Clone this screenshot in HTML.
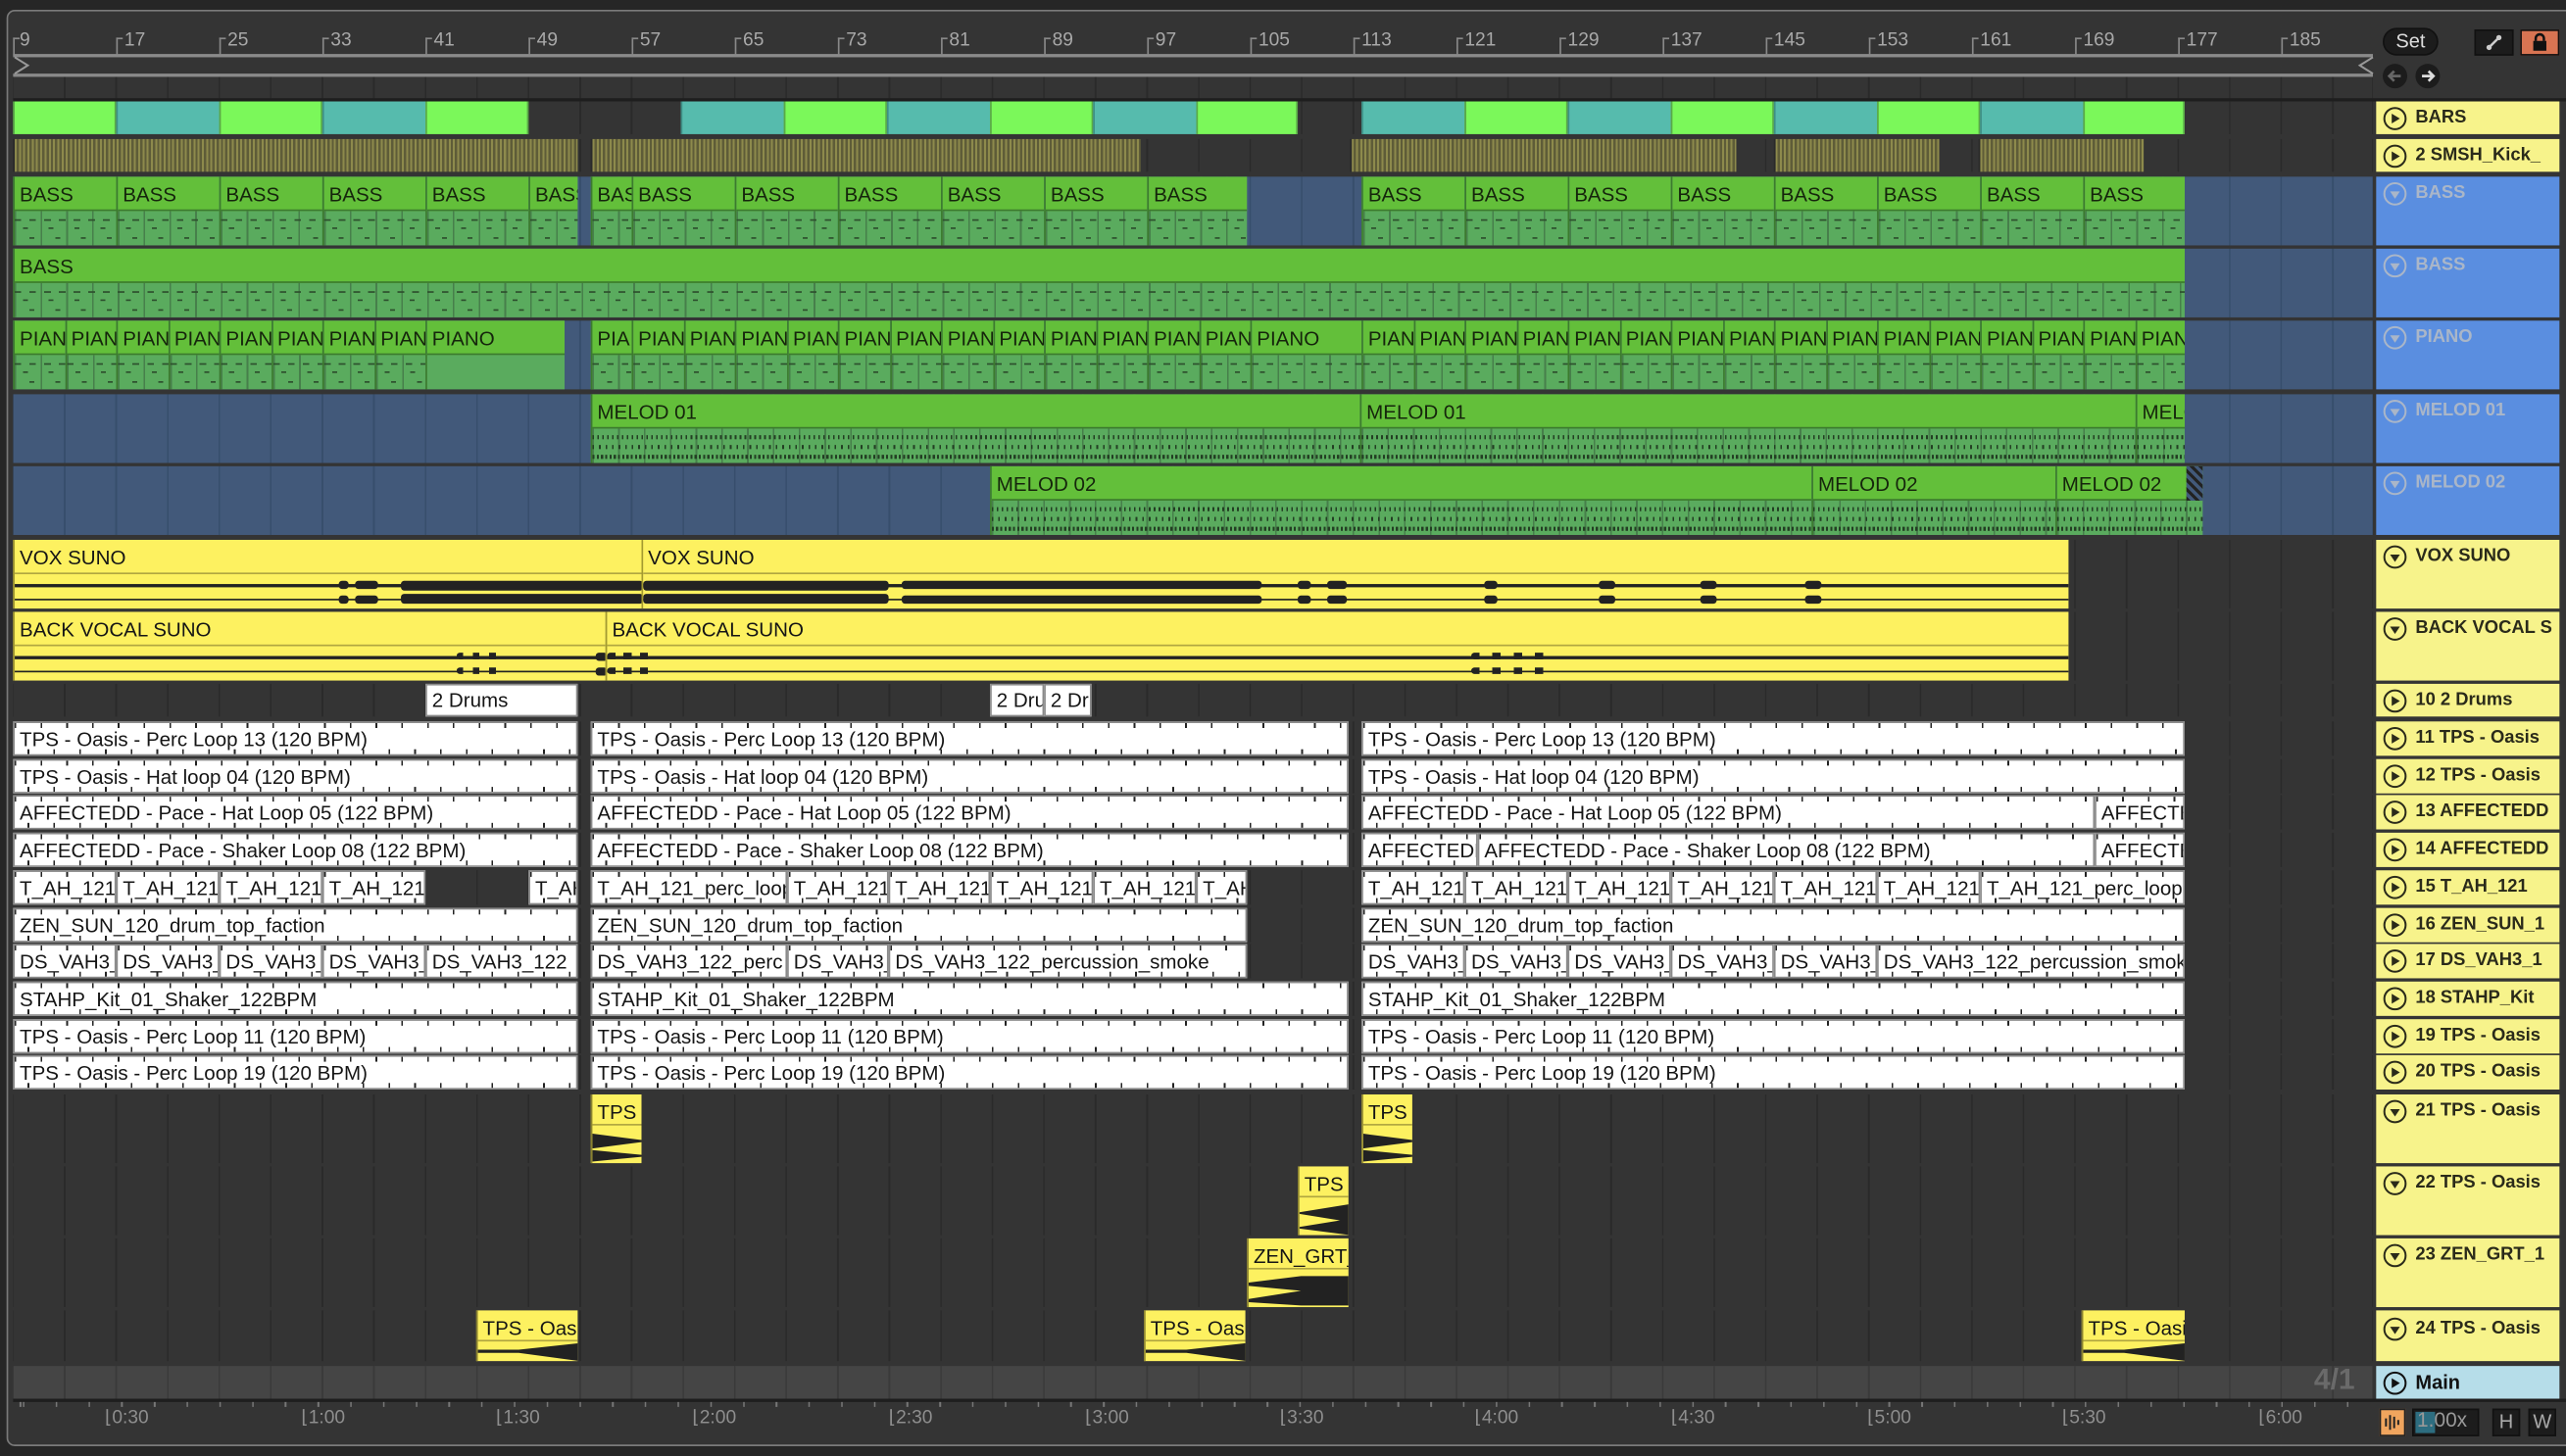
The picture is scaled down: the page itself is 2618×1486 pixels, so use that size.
<!DOCTYPE html>
<html><head><meta charset="utf-8">
<style>
*{margin:0;padding:0;box-sizing:border-box}
html,body{width:2618px;height:1486px;overflow:hidden;background:#262626}
#s{position:absolute;left:0;top:0;width:1568px;height:890px;transform:scale(1.66964);transform-origin:0 0;font-family:"Liberation Sans",sans-serif}
.frame{position:absolute;left:4px;top:6px;width:1570px;height:878px;border:1.5px solid #7a7a7a;border-radius:5px;background:#343434}
.ab{position:absolute}
.lane{position:absolute;left:8px;width:1442px;background:repeating-linear-gradient(90deg,#2a2a2a 0 1px,#343434 1px 31.5px);background-position:-0.5px 0}
.blue{background:repeating-linear-gradient(90deg,#374e6c 0 1px,#42597a 1px 31.5px);background-position:-0.5px 0}
.mainl{background:repeating-linear-gradient(90deg,#3a3a3a 0 1px,#454545 1px 31.5px);background-position:-0.5px 0}
.row{position:absolute;left:0;width:1568px}
.c{position:absolute;top:0;height:100%;overflow:hidden;white-space:nowrap;font-size:12.3px;color:#151515}
.bar{background:#7bf85a;border-left:1px solid #5aa848;border-right:1px solid #5aa848}
.tl{background:#56bbad;border-left:1px solid #3e8f86}
.sm{background:repeating-linear-gradient(90deg,#8d8a4c 0 1.2px,#5e5c38 1.2px 2.6px);border-left:1px solid #2a2a2a}
.g{background:#5aab5e;border-left:1px solid #3c7a2e;
 background-image:repeating-linear-gradient(90deg,#2d4f2d 0 4px,transparent 4px 9px),repeating-linear-gradient(90deg,transparent 0 5px,#2d4f2d 5px 8px,transparent 8px 15.75px),repeating-linear-gradient(90deg,transparent 0 9px,#2d4f2d 9px 12px,transparent 12px 15.75px),repeating-linear-gradient(90deg,#477f4b 0 1px,transparent 1px 15.75px);
 background-size:100% 1.3px,100% 1.3px,100% 1.3px,100% 100%;background-position:0 26px,0 31px,0 37px,0 0;background-repeat:no-repeat,no-repeat,no-repeat,repeat}
.g.m{background-image:repeating-linear-gradient(90deg,#233e23 0 1px,transparent 1px 3px),repeating-linear-gradient(90deg,#233e23 0 1px,transparent 1px 4px),repeating-linear-gradient(90deg,#233e23 0 1.3px,transparent 1.3px 2.6px),repeating-linear-gradient(90deg,#477f4b 0 1px,transparent 1px 15.75px);background-size:100% 2.5px,100% 2.5px,100% 2.5px,100% 100%;background-position:0 25px,0 31px,0 37px,0 0}
.g b{display:block;height:21px;background:#63bf3a;border-bottom:1px solid #3c7a2e;font-weight:normal;padding:4px 0 0 3px;color:#15250c}
.y{background:#fdf160;border-left:1px solid #a39a30}
.y b{display:block;height:21px;border-bottom:1px solid #b0a640;font-weight:normal;padding:4px 0 0 3px}
.yl{position:absolute;left:0;right:0;height:1.5px;background:#222}
.wv{position:absolute;height:5px;background:#222;border-radius:2px}
.w{background:#fff;border:1.5px solid #8a8a8a;padding:3px 0 0 3px;
 background-image:repeating-linear-gradient(90deg,#222 0 1px,transparent 1px 15.75px),repeating-linear-gradient(90deg,transparent 0 7.9px,#222 7.9px 8.9px,transparent 8.9px 15.75px);
 background-size:100% 3px,100% 3px;background-position:0 0,0 100%;background-repeat:no-repeat}
.ys{background:#fdf160;border-left:1px solid #8a8230}
.ys b{display:block;height:19px;border-bottom:1px solid #b0a640;font-weight:normal;padding:4px 0 0 3px;font-size:12.3px}
.p{position:absolute;left:1452px;width:112px;overflow:hidden;white-space:nowrap;font-size:11px;font-weight:bold;color:#2a2a1a;padding:4px 0 0 24px}
.p svg{position:absolute;left:4px;top:3px}
.py{background:#f7f38b}.pb{background:#5a8ee0;color:#aab6c8}.pm{background:#b6dde9;color:#111}
.rn{position:absolute;top:19px;font-size:11.5px;color:#a8a8a8}
.rt{position:absolute;top:23px;width:4px;height:11px;border-left:1px solid #888;border-top:1px solid #888}
.bt{position:absolute;top:859px;font-size:11.5px;color:#8e8e8e}
</style></head><body><div id="s">
<div class="frame"></div>
<div class="ab" style="left:8px;top:33px;width:1442px;height:1.5px;background:#8a8a8a"></div>
<div class="ab" style="left:8px;top:45px;width:1442px;height:1.5px;background:#8a8a8a"></div>
<svg class="ab" style="left:8px;top:34px" width="12" height="12"><path d="M1 1 L9 6 L1 11" stroke="#999" fill="none" stroke-width="1.2"/></svg>
<svg class="ab" style="left:1440px;top:34px" width="12" height="12"><path d="M10 1 L2 6 L10 11" stroke="#999" fill="none" stroke-width="1.2"/></svg>
<div class="lane" style="top:47px;height:13px"></div>
<div class="rt" style="left:8px"></div><div class="rn" style="left:12px">9</div>
<div class="rt" style="left:71px"></div><div class="rn" style="left:76px">17</div>
<div class="rt" style="left:134px"></div><div class="rn" style="left:139px">25</div>
<div class="rt" style="left:197px"></div><div class="rn" style="left:202px">33</div>
<div class="rt" style="left:260px"></div><div class="rn" style="left:265px">41</div>
<div class="rt" style="left:323px"></div><div class="rn" style="left:328px">49</div>
<div class="rt" style="left:386px"></div><div class="rn" style="left:391px">57</div>
<div class="rt" style="left:449px"></div><div class="rn" style="left:454px">65</div>
<div class="rt" style="left:512px"></div><div class="rn" style="left:517px">73</div>
<div class="rt" style="left:575px"></div><div class="rn" style="left:580px">81</div>
<div class="rt" style="left:638px"></div><div class="rn" style="left:643px">89</div>
<div class="rt" style="left:701px"></div><div class="rn" style="left:706px">97</div>
<div class="rt" style="left:764px"></div><div class="rn" style="left:769px">105</div>
<div class="rt" style="left:827px"></div><div class="rn" style="left:832px">113</div>
<div class="rt" style="left:890px"></div><div class="rn" style="left:895px">121</div>
<div class="rt" style="left:953px"></div><div class="rn" style="left:958px">129</div>
<div class="rt" style="left:1016px"></div><div class="rn" style="left:1021px">137</div>
<div class="rt" style="left:1079px"></div><div class="rn" style="left:1084px">145</div>
<div class="rt" style="left:1142px"></div><div class="rn" style="left:1147px">153</div>
<div class="rt" style="left:1205px"></div><div class="rn" style="left:1210px">161</div>
<div class="rt" style="left:1268px"></div><div class="rn" style="left:1273px">169</div>
<div class="rt" style="left:1331px"></div><div class="rn" style="left:1336px">177</div>
<div class="rt" style="left:1394px"></div><div class="rn" style="left:1399px">185</div>
<div class="ab" style="left:8px;top:60px;width:1560px;height:2px;background:#1e1e1e"></div>
<div class="ab" style="left:1456px;top:17px;width:34px;height:17px;border-radius:9px;background:#1c1c1c;border:1px solid #111;color:#ddd;font-size:12px;text-align:center;line-height:15px">Set</div>
<div class="ab" style="left:1456px;top:39px;width:15px;height:15px;border-radius:50%;background:#1c1c1c"></div>
<svg class="ab" style="left:1456px;top:39px" width="15" height="15"><path d="M11 7.5H4M7 4.5L4 7.5L7 10.5" stroke="#666" stroke-width="1.6" fill="none"/></svg>
<div class="ab" style="left:1476px;top:39px;width:15px;height:15px;border-radius:50%;background:#1c1c1c"></div>
<svg class="ab" style="left:1476px;top:39px" width="15" height="15"><path d="M4 7.5H11M8 4.5L11 7.5L8 10.5" stroke="#ddd" stroke-width="1.6" fill="none"/></svg>
<div class="ab" style="left:1512px;top:18px;width:24px;height:16px;background:#1c1c1c;border:1px solid #111"></div>
<svg class="ab" style="left:1512px;top:18px" width="24" height="16"><path d="M9 11L15 5" stroke="#ccc" stroke-width="1.5"/><circle cx="9" cy="11" r="1.6" fill="#ccc"/><circle cx="15" cy="5" r="1.6" fill="#ccc"/></svg>
<div class="ab" style="left:1540px;top:18px;width:24px;height:16px;background:#d97452;border:1px solid #111"></div>
<svg class="ab" style="left:1540px;top:18px" width="24" height="16"><rect x="8" y="7" width="8" height="6" fill="#111"/><path d="M9.5 7V5.5a2.5 2.5 0 0 1 5 0V7" stroke="#111" stroke-width="1.5" fill="none"/></svg>

<div class="lane" style="top:62px;height:20px"></div>
<div class="lane" style="top:85px;height:20px"></div>
<div class="lane blue" style="top:108px;height:42px"></div>
<div class="lane blue" style="top:152px;height:42px"></div>
<div class="lane blue" style="top:196px;height:42px"></div>
<div class="lane blue" style="top:241px;height:42px"></div>
<div class="lane blue" style="top:285px;height:42px"></div>
<div class="lane" style="top:330px;height:42px"></div>
<div class="lane" style="top:374px;height:42px"></div>
<div class="lane" style="top:418px;height:20px"></div>
<div class="lane" style="top:441px;height:21px"></div>
<div class="lane" style="top:464px;height:21px"></div>
<div class="lane" style="top:486px;height:21px"></div>
<div class="lane" style="top:509px;height:21px"></div>
<div class="lane" style="top:532px;height:21px"></div>
<div class="lane" style="top:555px;height:21px"></div>
<div class="lane" style="top:577px;height:21px"></div>
<div class="lane" style="top:600px;height:21px"></div>
<div class="lane" style="top:623px;height:21px"></div>
<div class="lane" style="top:645px;height:21px"></div>
<div class="lane" style="top:669px;height:42px"></div>
<div class="lane" style="top:713px;height:42px"></div>
<div class="lane" style="top:757px;height:42px"></div>
<div class="lane" style="top:801px;height:31px"></div>
<div class="lane mainl" style="top:835px;height:20px"></div>
<div class="ab" style="left:1414px;top:833px;font-size:18px;font-weight:bold;color:#6a6a6a">4/1</div>

<div class="row" style="top:62px;height:20px">
<div class="c bar" style="left:8px;width:63px"></div><div class="c tl" style="left:71px;width:63px"></div><div class="c bar" style="left:134px;width:63px"></div><div class="c tl" style="left:197px;width:63px"></div><div class="c bar" style="left:260px;width:63px"></div>
<div class="c tl" style="left:416px;width:63px"></div><div class="c bar" style="left:479px;width:63px"></div><div class="c tl" style="left:542px;width:63px"></div><div class="c bar" style="left:605px;width:63px"></div><div class="c tl" style="left:668px;width:63px"></div><div class="c bar" style="left:731px;width:62px"></div>
<div class="c tl" style="left:832px;width:63px"></div><div class="c bar" style="left:895px;width:63px"></div><div class="c tl" style="left:958px;width:63px"></div><div class="c bar" style="left:1021px;width:63px"></div><div class="c tl" style="left:1084px;width:63px"></div><div class="c bar" style="left:1147px;width:63px"></div><div class="c tl" style="left:1210px;width:63px"></div><div class="c bar" style="left:1273px;width:62px"></div>
</div>
<div class="row" style="top:85px;height:20px">
<div class="c sm" style="left:8px;width:345px"></div><div class="c sm" style="left:361px;width:336px"></div><div class="c sm" style="left:825px;width:236px"></div><div class="c sm" style="left:1084px;width:101px"></div><div class="c sm" style="left:1209px;width:101px"></div>
</div>
<div class="row" style="top:108px;height:42px">
<div class="c g" style="left:8px;width:63px"><b>BASS</b></div><div class="c g" style="left:71px;width:63px"><b>BASS</b></div><div class="c g" style="left:134px;width:63px"><b>BASS</b></div><div class="c g" style="left:197px;width:63px"><b>BASS</b></div><div class="c g" style="left:260px;width:63px"><b>BASS</b></div><div class="c g" style="left:323px;width:30px"><b>BASS</b></div>
<div class="c g" style="left:361px;width:25px"><b>BAS</b></div><div class="c g" style="left:386px;width:63px"><b>BASS</b></div><div class="c g" style="left:449px;width:63px"><b>BASS</b></div><div class="c g" style="left:512px;width:63px"><b>BASS</b></div><div class="c g" style="left:575px;width:63px"><b>BASS</b></div><div class="c g" style="left:638px;width:63px"><b>BASS</b></div><div class="c g" style="left:701px;width:61px"><b>BASS</b></div>
<div class="c g" style="left:832px;width:63px"><b>BASS</b></div><div class="c g" style="left:895px;width:63px"><b>BASS</b></div><div class="c g" style="left:958px;width:63px"><b>BASS</b></div><div class="c g" style="left:1021px;width:63px"><b>BASS</b></div><div class="c g" style="left:1084px;width:63px"><b>BASS</b></div><div class="c g" style="left:1147px;width:63px"><b>BASS</b></div><div class="c g" style="left:1210px;width:63px"><b>BASS</b></div><div class="c g" style="left:1273px;width:62px"><b>BASS</b></div>
</div>
<div class="row" style="top:152px;height:42px"><div class="c g" style="left:8px;width:1327px"><b>BASS</b></div></div>
<div class="row" style="top:196px;height:42px">
<div class="c g" style="left:8px;width:31.5px"><b>PIAN</b></div><div class="c g" style="left:39.5px;width:31.5px"><b>PIAN</b></div><div class="c g" style="left:71px;width:31.5px"><b>PIAN</b></div><div class="c g" style="left:102.5px;width:31.5px"><b>PIAN</b></div><div class="c g" style="left:134px;width:31.5px"><b>PIAN</b></div><div class="c g" style="left:165.5px;width:31.5px"><b>PIAN</b></div><div class="c g" style="left:197px;width:31.5px"><b>PIAN</b></div><div class="c g" style="left:228.5px;width:31.5px"><b>PIAN</b></div><div class="c g" style="left:260px;width:85px;background-image:none"><b>PIANO</b></div>
<div class="c g" style="left:361px;width:25px"><b>PIA</b></div>
<div class="c g" style="left:386px;width:31.5px"><b>PIAN</b></div><div class="c g" style="left:417.5px;width:31.5px"><b>PIAN</b></div><div class="c g" style="left:449px;width:31.5px"><b>PIAN</b></div><div class="c g" style="left:480.5px;width:31.5px"><b>PIAN</b></div><div class="c g" style="left:512px;width:31.5px"><b>PIAN</b></div><div class="c g" style="left:543.5px;width:31.5px"><b>PIAN</b></div><div class="c g" style="left:575px;width:31.5px"><b>PIAN</b></div><div class="c g" style="left:606.5px;width:31.5px"><b>PIAN</b></div><div class="c g" style="left:638px;width:31.5px"><b>PIAN</b></div><div class="c g" style="left:669.5px;width:31.5px"><b>PIAN</b></div><div class="c g" style="left:701px;width:31.5px"><b>PIAN</b></div><div class="c g" style="left:732.5px;width:31.5px"><b>PIAN</b></div><div class="c g" style="left:764px;width:68px"><b>PIANO</b></div>
<div class="c g" style="left:832px;width:31.5px"><b>PIAN</b></div><div class="c g" style="left:863.5px;width:31.5px"><b>PIAN</b></div><div class="c g" style="left:895px;width:31.5px"><b>PIAN</b></div><div class="c g" style="left:926.5px;width:31.5px"><b>PIAN</b></div><div class="c g" style="left:958px;width:31.5px"><b>PIAN</b></div><div class="c g" style="left:989.5px;width:31.5px"><b>PIAN</b></div><div class="c g" style="left:1021px;width:31.5px"><b>PIAN</b></div><div class="c g" style="left:1052.5px;width:31.5px"><b>PIAN</b></div><div class="c g" style="left:1084px;width:31.5px"><b>PIAN</b></div><div class="c g" style="left:1115.5px;width:31.5px"><b>PIAN</b></div><div class="c g" style="left:1147px;width:31.5px"><b>PIAN</b></div><div class="c g" style="left:1178.5px;width:31.5px"><b>PIAN</b></div><div class="c g" style="left:1210px;width:31.5px"><b>PIAN</b></div><div class="c g" style="left:1241.5px;width:31.5px"><b>PIAN</b></div><div class="c g" style="left:1273px;width:31.5px"><b>PIAN</b></div><div class="c g" style="left:1304.5px;width:30.5px"><b>PIAN</b></div>
</div>
<div class="row" style="top:241px;height:42px">
<div class="c g m" style="left:361px;width:470px"><b>MELOD 01</b></div><div class="c g m" style="left:831px;width:474px"><b>MELOD 01</b></div><div class="c g m" style="left:1305px;width:30px"><b>MELO</b></div>
</div>
<div class="row" style="top:285px;height:42px">
<div class="c g m" style="left:605px;width:502px"><b>MELOD 02</b></div><div class="c g m" style="left:1107px;width:149px"><b>MELOD 02</b></div><div class="c g m" style="left:1256px;width:90px"><b>MELOD 02</b></div>
<div class="c" style="left:1336px;width:10px;height:21px;background:repeating-linear-gradient(45deg,#222 0 2px,#42597a 2px 4px)"></div>
</div>
<!-- VOX -->
<div class="row" style="top:330px;height:42px">
<div class="c y" style="left:8px;width:384px"><b>VOX SUNO</b><div class="yl" style="top:27px"></div><div class="yl" style="top:35.5px"></div>
<div class="wv" style="left:198px;top:25px;width:6px"></div><div class="wv" style="left:198px;top:33.5px;width:6px"></div>
<div class="wv" style="left:208px;top:25px;width:14px"></div><div class="wv" style="left:208px;top:33.5px;width:14px"></div>
<div class="wv" style="left:236px;top:24.5px;width:148px;height:6px"></div><div class="wv" style="left:236px;top:33px;width:148px;height:6px"></div></div>
<div class="c y" style="left:392px;width:872px"><b>VOX SUNO</b><div class="yl" style="top:27px"></div><div class="yl" style="top:35.5px"></div>
<div class="wv" style="left:0;top:24.5px;width:150px;height:6px"></div><div class="wv" style="left:0;top:33px;width:150px;height:6px"></div>
<div class="wv" style="left:158px;top:25px;width:220px"></div><div class="wv" style="left:158px;top:33.5px;width:220px"></div>
<div class="wv" style="left:400px;top:25px;width:8px"></div><div class="wv" style="left:400px;top:33.5px;width:8px"></div>
<div class="wv" style="left:418px;top:25px;width:12px"></div><div class="wv" style="left:418px;top:33.5px;width:12px"></div>
<div class="wv" style="left:514px;top:25px;width:8px"></div><div class="wv" style="left:514px;top:33.5px;width:8px"></div>
<div class="wv" style="left:584px;top:25px;width:10px"></div><div class="wv" style="left:584px;top:33.5px;width:10px"></div>
<div class="wv" style="left:646px;top:25px;width:10px"></div><div class="wv" style="left:646px;top:33.5px;width:10px"></div>
<div class="wv" style="left:710px;top:25px;width:10px"></div><div class="wv" style="left:710px;top:33.5px;width:10px"></div>
</div>
</div>
<div class="row" style="top:374px;height:42px">
<div class="c y" style="left:8px;width:362px"><b>BACK VOCAL SUNO</b><div class="yl" style="top:27px"></div><div class="yl" style="top:35.5px"></div><div class="wv" style="left:270px;top:25px;width:30px;height:4px;background:repeating-linear-gradient(90deg,#222 0 4px,transparent 4px 10px)"></div><div class="wv" style="left:270px;top:33.5px;width:30px;height:4px;background:repeating-linear-gradient(90deg,#222 0 4px,transparent 4px 10px)"></div><div class="wv" style="left:355px;top:25px;width:7px"></div><div class="wv" style="left:355px;top:33.5px;width:7px"></div></div>
<div class="c y" style="left:370px;width:894px"><b>BACK VOCAL SUNO</b><div class="yl" style="top:27px"></div><div class="yl" style="top:35.5px"></div><div class="wv" style="left:0;top:25px;width:30px;height:4px;background:repeating-linear-gradient(90deg,#222 0 5px,transparent 5px 10px)"></div><div class="wv" style="left:0;top:33.5px;width:30px;height:4px;background:repeating-linear-gradient(90deg,#222 0 5px,transparent 5px 10px)"></div><div class="wv" style="left:528px;top:25px;width:50px;height:4px;background:repeating-linear-gradient(90deg,#222 0 5px,transparent 5px 13px)"></div><div class="wv" style="left:528px;top:33.5px;width:50px;height:4px;background:repeating-linear-gradient(90deg,#222 0 5px,transparent 5px 13px)"></div></div>
</div>
<div class="row" style="top:418px;height:20px">
<div class="c w" style="left:260px;width:93px;background-image:none;padding-top:2px">2 Drums</div><div class="c w" style="left:605px;width:33px;background-image:none;padding-top:2px">2 Dru</div><div class="c w" style="left:638px;width:29px;background-image:none;padding-top:2px">2 Dru</div>
</div>
<div class="row" style="top:441px;height:21px"><div class="c w" style="left:8px;width:345px">TPS - Oasis - Perc Loop 13 (120 BPM)</div><div class="c w" style="left:361px;width:463px">TPS - Oasis - Perc Loop 13 (120 BPM)</div><div class="c w" style="left:832px;width:503px">TPS - Oasis - Perc Loop 13 (120 BPM)</div></div>
<div class="row" style="top:464px;height:21px"><div class="c w" style="left:8px;width:345px">TPS - Oasis - Hat loop 04 (120 BPM)</div><div class="c w" style="left:361px;width:463px">TPS - Oasis - Hat loop 04 (120 BPM)</div><div class="c w" style="left:832px;width:503px">TPS - Oasis - Hat loop 04 (120 BPM)</div></div>
<div class="row" style="top:486px;height:21px"><div class="c w" style="left:8px;width:345px">AFFECTEDD - Pace - Hat Loop 05 (122 BPM)</div><div class="c w" style="left:361px;width:463px">AFFECTEDD - Pace - Hat Loop 05 (122 BPM)</div><div class="c w" style="left:832px;width:448px">AFFECTEDD - Pace - Hat Loop 05 (122 BPM)</div><div class="c w" style="left:1280px;width:55px">AFFECTEDD</div></div>
<div class="row" style="top:509px;height:21px"><div class="c w" style="left:8px;width:345px">AFFECTEDD - Pace - Shaker Loop 08 (122 BPM)</div><div class="c w" style="left:361px;width:463px">AFFECTEDD - Pace - Shaker Loop 08 (122 BPM)</div><div class="c w" style="left:832px;width:71px">AFFECTEDD</div><div class="c w" style="left:903px;width:377px">AFFECTEDD - Pace - Shaker Loop 08 (122 BPM)</div><div class="c w" style="left:1280px;width:55px">AFFECTEDD</div></div>
<div class="row" style="top:532px;height:21px">
<div class="c w" style="left:8px;width:63px">T_AH_121</div><div class="c w" style="left:71px;width:63px">T_AH_121</div><div class="c w" style="left:134px;width:63px">T_AH_121</div><div class="c w" style="left:197px;width:63px">T_AH_121</div><div class="c w" style="left:323px;width:30px">T_AH</div>
<div class="c w" style="left:361px;width:120px">T_AH_121_perc_loop</div><div class="c w" style="left:481px;width:62px">T_AH_121</div><div class="c w" style="left:543px;width:62px">T_AH_121</div><div class="c w" style="left:605px;width:63px">T_AH_121</div><div class="c w" style="left:668px;width:63px">T_AH_121</div><div class="c w" style="left:731px;width:31px">T_AH</div>
<div class="c w" style="left:832px;width:63px">T_AH_121</div><div class="c w" style="left:895px;width:63px">T_AH_121</div><div class="c w" style="left:958px;width:63px">T_AH_121</div><div class="c w" style="left:1021px;width:63px">T_AH_121</div><div class="c w" style="left:1084px;width:63px">T_AH_121</div><div class="c w" style="left:1147px;width:63px">T_AH_121</div><div class="c w" style="left:1210px;width:125px">T_AH_121_perc_loop</div></div>
<div class="row" style="top:555px;height:21px"><div class="c w" style="left:8px;width:345px">ZEN_SUN_120_drum_top_faction</div><div class="c w" style="left:361px;width:401px">ZEN_SUN_120_drum_top_faction</div><div class="c w" style="left:832px;width:503px">ZEN_SUN_120_drum_top_faction</div></div>
<div class="row" style="top:577px;height:21px">
<div class="c w" style="left:8px;width:63px">DS_VAH3_122</div><div class="c w" style="left:71px;width:63px">DS_VAH3_122</div><div class="c w" style="left:134px;width:63px">DS_VAH3_122</div><div class="c w" style="left:197px;width:63px">DS_VAH3_122</div><div class="c w" style="left:260px;width:93px">DS_VAH3_122</div>
<div class="c w" style="left:361px;width:120px">DS_VAH3_122_perc</div><div class="c w" style="left:481px;width:62px">DS_VAH3_122</div><div class="c w" style="left:543px;width:219px">DS_VAH3_122_percussion_smoke</div>
<div class="c w" style="left:832px;width:63px">DS_VAH3_122</div><div class="c w" style="left:895px;width:63px">DS_VAH3_122</div><div class="c w" style="left:958px;width:63px">DS_VAH3_122</div><div class="c w" style="left:1021px;width:63px">DS_VAH3_122</div><div class="c w" style="left:1084px;width:63px">DS_VAH3_122</div><div class="c w" style="left:1147px;width:188px">DS_VAH3_122_percussion_smoke</div></div>
<div class="row" style="top:600px;height:21px"><div class="c w" style="left:8px;width:345px">STAHP_Kit_01_Shaker_122BPM</div><div class="c w" style="left:361px;width:463px">STAHP_Kit_01_Shaker_122BPM</div><div class="c w" style="left:832px;width:503px">STAHP_Kit_01_Shaker_122BPM</div></div>
<div class="row" style="top:623px;height:21px"><div class="c w" style="left:8px;width:345px">TPS - Oasis - Perc Loop 11 (120 BPM)</div><div class="c w" style="left:361px;width:463px">TPS - Oasis - Perc Loop 11 (120 BPM)</div><div class="c w" style="left:832px;width:503px">TPS - Oasis - Perc Loop 11 (120 BPM)</div></div>
<div class="row" style="top:645px;height:21px"><div class="c w" style="left:8px;width:345px">TPS - Oasis - Perc Loop 19 (120 BPM)</div><div class="c w" style="left:361px;width:463px">TPS - Oasis - Perc Loop 19 (120 BPM)</div><div class="c w" style="left:832px;width:503px">TPS - Oasis - Perc Loop 19 (120 BPM)</div></div>
<div class="row" style="top:669px;height:42px">
<div class="c ys" style="left:361px;width:31px"><b>TPS - Oasis</b><svg class="ab" style="left:0;top:20px" width="31" height="22"><path d="M0 4L31 8V9L0 13Z M0 14L31 17V18L0 21Z" fill="#222"/></svg></div>
<div class="c ys" style="left:832px;width:31px"><b>TPS - Oasis</b><svg class="ab" style="left:0;top:20px" width="31" height="22"><path d="M0 4L31 8V9L0 13Z M0 14L31 17V18L0 21Z" fill="#222"/></svg></div></div>
<div class="row" style="top:713px;height:42px">
<div class="c ys" style="left:793px;width:31px"><b>TPS - Oasis</b><svg class="ab" style="left:0;top:20px" width="31" height="22"><path d="M0 8L31 3V14L0 9Z M0 17L31 12V22L0 18Z" fill="#222"/></svg></div></div>
<div class="row" style="top:757px;height:42px">
<div class="c ys" style="left:762px;width:62px"><b>ZEN_GRT_</b><svg class="ab" style="left:0;top:20px" width="62" height="22"><path d="M0 7L32 3H62V12H32L0 9Z M0 17L32 12H62V21H32L0 19Z" fill="#222"/></svg></div></div>
<div class="row" style="top:801px;height:31px">
<div class="c ys" style="left:291px;width:62px"><b>TPS - Oasis</b><svg class="ab" style="left:0;top:20px" width="62" height="11"><path d="M0 4H25L62 0V11L25 6H0Z" fill="#222"/></svg></div>
<div class="c ys" style="left:699px;width:62px"><b>TPS - Oasis</b><svg class="ab" style="left:0;top:20px" width="62" height="11"><path d="M0 4H25L62 0V11L25 6H0Z" fill="#222"/></svg></div>
<div class="c ys" style="left:1272px;width:63px"><b>TPS - Oasis</b><svg class="ab" style="left:0;top:20px" width="63" height="11"><path d="M0 4H25L63 0V11L25 6H0Z" fill="#222"/></svg></div></div>

<div class="p py" style="top:62px;height:20px"><svg width="15" height="15"><circle cx="7.5" cy="7.5" r="6.5" fill="none" stroke="#2a2a1a" stroke-width="1.2"/><path d="M5.5 4.5L10.5 7.5L5.5 10.5Z" fill="#2a2a1a"/></svg>BARS</div>
<div class="p py" style="top:85px;height:20px"><svg width="15" height="15"><circle cx="7.5" cy="7.5" r="6.5" fill="none" stroke="#2a2a1a" stroke-width="1.2"/><path d="M5.5 4.5L10.5 7.5L5.5 10.5Z" fill="#2a2a1a"/></svg>2 SMSH_Kick_</div>
<div class="p pb" style="top:108px;height:42px"><svg width="15" height="15"><circle cx="7.5" cy="7.5" r="6.5" fill="none" stroke="#aab6c8" stroke-width="1.2"/><path d="M4.5 6L10.5 6L7.5 10.5Z" fill="#aab6c8"/></svg>BASS</div>
<div class="p pb" style="top:152px;height:42px"><svg width="15" height="15"><circle cx="7.5" cy="7.5" r="6.5" fill="none" stroke="#aab6c8" stroke-width="1.2"/><path d="M4.5 6L10.5 6L7.5 10.5Z" fill="#aab6c8"/></svg>BASS</div>
<div class="p pb" style="top:196px;height:42px"><svg width="15" height="15"><circle cx="7.5" cy="7.5" r="6.5" fill="none" stroke="#aab6c8" stroke-width="1.2"/><path d="M4.5 6L10.5 6L7.5 10.5Z" fill="#aab6c8"/></svg>PIANO</div>
<div class="p pb" style="top:241px;height:42px"><svg width="15" height="15"><circle cx="7.5" cy="7.5" r="6.5" fill="none" stroke="#aab6c8" stroke-width="1.2"/><path d="M4.5 6L10.5 6L7.5 10.5Z" fill="#aab6c8"/></svg>MELOD 01</div>
<div class="p pb" style="top:285px;height:42px"><svg width="15" height="15"><circle cx="7.5" cy="7.5" r="6.5" fill="none" stroke="#aab6c8" stroke-width="1.2"/><path d="M4.5 6L10.5 6L7.5 10.5Z" fill="#aab6c8"/></svg>MELOD 02</div>
<div class="p py" style="top:330px;height:42px"><svg width="15" height="15"><circle cx="7.5" cy="7.5" r="6.5" fill="none" stroke="#2a2a1a" stroke-width="1.2"/><path d="M4.5 6L10.5 6L7.5 10.5Z" fill="#2a2a1a"/></svg>VOX SUNO</div>
<div class="p py" style="top:374px;height:42px"><svg width="15" height="15"><circle cx="7.5" cy="7.5" r="6.5" fill="none" stroke="#2a2a1a" stroke-width="1.2"/><path d="M4.5 6L10.5 6L7.5 10.5Z" fill="#2a2a1a"/></svg>BACK VOCAL S</div>
<div class="p py" style="top:418px;height:20px"><svg width="15" height="15"><circle cx="7.5" cy="7.5" r="6.5" fill="none" stroke="#2a2a1a" stroke-width="1.2"/><path d="M5.5 4.5L10.5 7.5L5.5 10.5Z" fill="#2a2a1a"/></svg>10 2 Drums</div>
<div class="p py" style="top:441px;height:21px"><svg width="15" height="15"><circle cx="7.5" cy="7.5" r="6.5" fill="none" stroke="#2a2a1a" stroke-width="1.2"/><path d="M5.5 4.5L10.5 7.5L5.5 10.5Z" fill="#2a2a1a"/></svg>11 TPS - Oasis</div>
<div class="p py" style="top:464px;height:21px"><svg width="15" height="15"><circle cx="7.5" cy="7.5" r="6.5" fill="none" stroke="#2a2a1a" stroke-width="1.2"/><path d="M5.5 4.5L10.5 7.5L5.5 10.5Z" fill="#2a2a1a"/></svg>12 TPS - Oasis</div>
<div class="p py" style="top:486px;height:21px"><svg width="15" height="15"><circle cx="7.5" cy="7.5" r="6.5" fill="none" stroke="#2a2a1a" stroke-width="1.2"/><path d="M5.5 4.5L10.5 7.5L5.5 10.5Z" fill="#2a2a1a"/></svg>13 AFFECTEDD</div>
<div class="p py" style="top:509px;height:21px"><svg width="15" height="15"><circle cx="7.5" cy="7.5" r="6.5" fill="none" stroke="#2a2a1a" stroke-width="1.2"/><path d="M5.5 4.5L10.5 7.5L5.5 10.5Z" fill="#2a2a1a"/></svg>14 AFFECTEDD</div>
<div class="p py" style="top:532px;height:21px"><svg width="15" height="15"><circle cx="7.5" cy="7.5" r="6.5" fill="none" stroke="#2a2a1a" stroke-width="1.2"/><path d="M5.5 4.5L10.5 7.5L5.5 10.5Z" fill="#2a2a1a"/></svg>15 T_AH_121</div>
<div class="p py" style="top:555px;height:21px"><svg width="15" height="15"><circle cx="7.5" cy="7.5" r="6.5" fill="none" stroke="#2a2a1a" stroke-width="1.2"/><path d="M5.5 4.5L10.5 7.5L5.5 10.5Z" fill="#2a2a1a"/></svg>16 ZEN_SUN_1</div>
<div class="p py" style="top:577px;height:21px"><svg width="15" height="15"><circle cx="7.5" cy="7.5" r="6.5" fill="none" stroke="#2a2a1a" stroke-width="1.2"/><path d="M5.5 4.5L10.5 7.5L5.5 10.5Z" fill="#2a2a1a"/></svg>17 DS_VAH3_1</div>
<div class="p py" style="top:600px;height:21px"><svg width="15" height="15"><circle cx="7.5" cy="7.5" r="6.5" fill="none" stroke="#2a2a1a" stroke-width="1.2"/><path d="M5.5 4.5L10.5 7.5L5.5 10.5Z" fill="#2a2a1a"/></svg>18 STAHP_Kit</div>
<div class="p py" style="top:623px;height:21px"><svg width="15" height="15"><circle cx="7.5" cy="7.5" r="6.5" fill="none" stroke="#2a2a1a" stroke-width="1.2"/><path d="M5.5 4.5L10.5 7.5L5.5 10.5Z" fill="#2a2a1a"/></svg>19 TPS - Oasis</div>
<div class="p py" style="top:645px;height:21px"><svg width="15" height="15"><circle cx="7.5" cy="7.5" r="6.5" fill="none" stroke="#2a2a1a" stroke-width="1.2"/><path d="M5.5 4.5L10.5 7.5L5.5 10.5Z" fill="#2a2a1a"/></svg>20 TPS - Oasis</div>
<div class="p py" style="top:669px;height:42px"><svg width="15" height="15"><circle cx="7.5" cy="7.5" r="6.5" fill="none" stroke="#2a2a1a" stroke-width="1.2"/><path d="M4.5 6L10.5 6L7.5 10.5Z" fill="#2a2a1a"/></svg>21 TPS - Oasis</div>
<div class="p py" style="top:713px;height:42px"><svg width="15" height="15"><circle cx="7.5" cy="7.5" r="6.5" fill="none" stroke="#2a2a1a" stroke-width="1.2"/><path d="M4.5 6L10.5 6L7.5 10.5Z" fill="#2a2a1a"/></svg>22 TPS - Oasis</div>
<div class="p py" style="top:757px;height:42px"><svg width="15" height="15"><circle cx="7.5" cy="7.5" r="6.5" fill="none" stroke="#2a2a1a" stroke-width="1.2"/><path d="M4.5 6L10.5 6L7.5 10.5Z" fill="#2a2a1a"/></svg>23 ZEN_GRT_1</div>
<div class="p py" style="top:801px;height:31px;padding-top:5px"><svg width="15" height="15" style="top:4px"><circle cx="7.5" cy="7.5" r="6.5" fill="none" stroke="#2a2a1a" stroke-width="1.2"/><path d="M4.5 6L10.5 6L7.5 10.5Z" fill="#2a2a1a"/></svg>24 TPS - Oasis</div>
<div class="p pm" style="top:835px;height:20px;font-size:12px;padding-top:3px"><svg width="15" height="15" style="top:2.5px"><circle cx="7.5" cy="7.5" r="6.5" fill="none" stroke="#111" stroke-width="1.2"/><path d="M5.5 4.5L10.5 7.5L5.5 10.5Z" fill="#111"/></svg>Main</div>

<div class="ab" style="left:8px;top:855px;width:1560px;height:2px;background:#1e1e1e"></div>
<div class="ab" style="left:8px;top:857px;width:1442px;height:3px;background:repeating-linear-gradient(90deg,#777 0 1px,transparent 1px 20px);background-position:6px 0"></div>
<div class="bt" style="left:64px">⌊0:30</div><div class="bt" style="left:184px">⌊1:00</div><div class="bt" style="left:303px">⌊1:30</div><div class="bt" style="left:423px">⌊2:00</div><div class="bt" style="left:543px">⌊2:30</div><div class="bt" style="left:663px">⌊3:00</div><div class="bt" style="left:782px">⌊3:30</div><div class="bt" style="left:901px">⌊4:00</div><div class="bt" style="left:1021px">⌊4:30</div><div class="bt" style="left:1141px">⌊5:00</div><div class="bt" style="left:1260px">⌊5:30</div><div class="bt" style="left:1380px">⌊6:00</div>
<div class="ab" style="left:1454px;top:861px;width:16px;height:17px;background:#f0a55e;border:1px solid #222"></div>
<svg class="ab" style="left:1454px;top:861px" width="16" height="17"><path d="M4 6V11M6.5 4V13M9 5V12M11.5 7V10" stroke="#222" stroke-width="1.2"/></svg>
<div class="ab" style="left:1474px;top:861px;width:41px;height:17px;background:#1c1c1c;border:1px solid #111"></div>
<div class="ab" style="left:1476px;top:863px;width:12px;height:13px;background:#2d6d80"></div>
<div class="ab" style="left:1477px;top:861px;font-size:12.5px;color:#999">1.00x</div>
<div class="ab" style="left:1523px;top:861px;width:17px;height:17px;background:#1c1c1c;border:1px solid #111;color:#aaa;font-size:12px;text-align:center;line-height:15px">H</div>
<div class="ab" style="left:1545px;top:861px;width:17px;height:17px;background:#1c1c1c;border:1px solid #111;color:#aaa;font-size:12px;text-align:center;line-height:15px">W</div>
</div></body></html>
